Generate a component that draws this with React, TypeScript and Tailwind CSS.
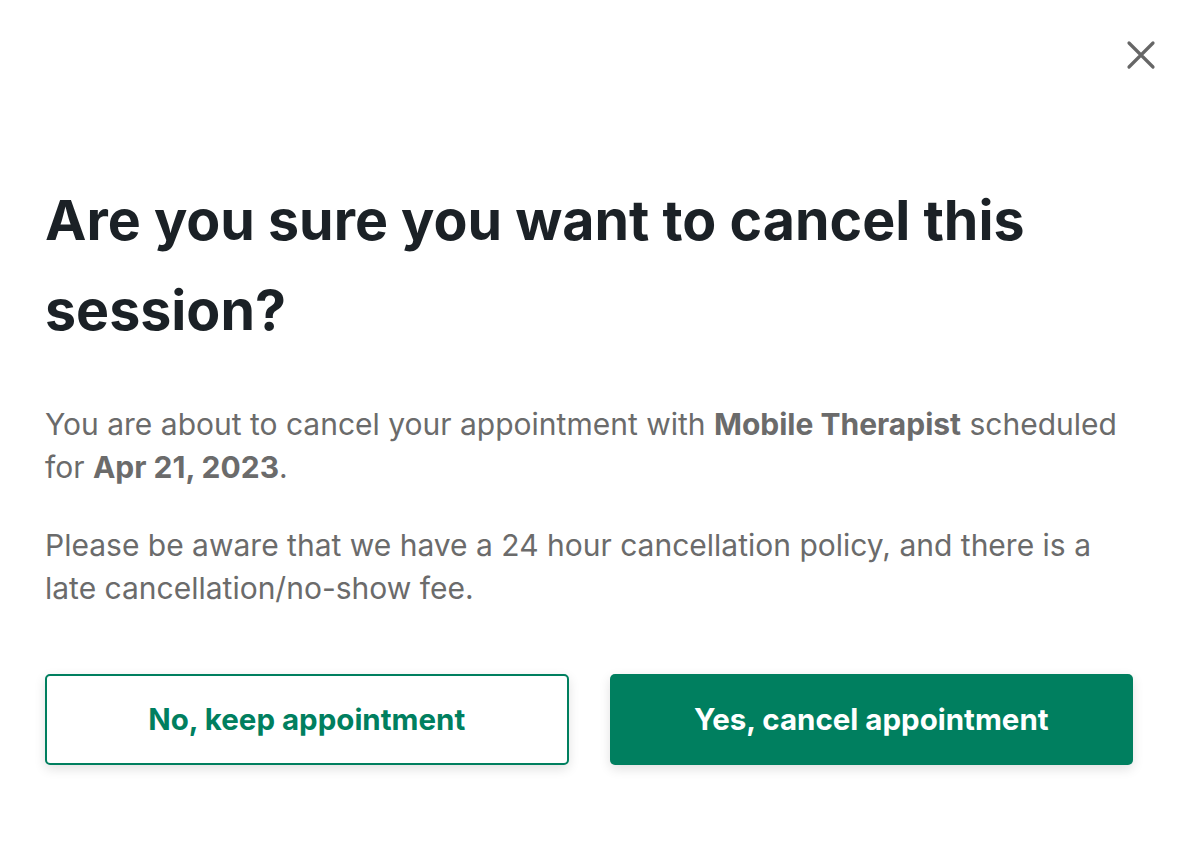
export default function App() {
  return (
    <div className="min-h-screen bg-white" style={{ fontFamily: "Inter, 'Noto Sans', sans-serif" }}>
      <div className="relative w-[1182px] h-[850px] pl-[45px] pr-[40px] pt-[175px]">
        <button
          type="button"
          aria-label="Close"
          className="absolute right-[26px] top-[40px] w-[30px] h-[30px] flex items-center justify-center text-[#666666]"
        >
          <svg width="30" height="30" viewBox="0 0 30 30" fill="none" stroke="currentColor" strokeWidth="3.2" strokeLinecap="round">
            <path d="M3 3 L27 27 M27 3 L3 27" />
          </svg>
        </button>

        <h1 className="text-[55.5px] leading-[90px] font-bold text-[#1b2126]">
          Are you sure you want to cancel this session?
        </h1>

        <div className="mt-[48px] text-[30px] leading-[43px] text-[#6b6b6b]">
          <p>
            You are about to cancel your appointment with <span className="font-bold">Mobile Therapist</span> scheduled for{" "}
            <span className="font-bold">Apr 21, 2023</span>.
          </p>
          <p className="mt-[35px]">
            Please be aware that we have a 24 hour cancellation policy, and there is a late cancellation/no-show fee.
          </p>
        </div>

        <div className="mt-[64px] grid grid-cols-2 gap-[41px] w-[1088px]">
          <button
            type="button"
            className="h-[91px] rounded-[5px] border-2 border-[#007f5f] bg-white text-[#007f5f] text-[29.5px] font-bold shadow-[0_4px_12px_rgba(0,0,0,0.12)]"
          >
            No, keep appointment
          </button>
          <button
            type="button"
            className="h-[91px] rounded-[5px] bg-[#007f5f] text-white text-[29.5px] font-bold shadow-[0_4px_12px_rgba(0,0,0,0.12)]"
          >
            Yes, cancel appointment
          </button>
        </div>
      </div>
    </div>
  );
}
